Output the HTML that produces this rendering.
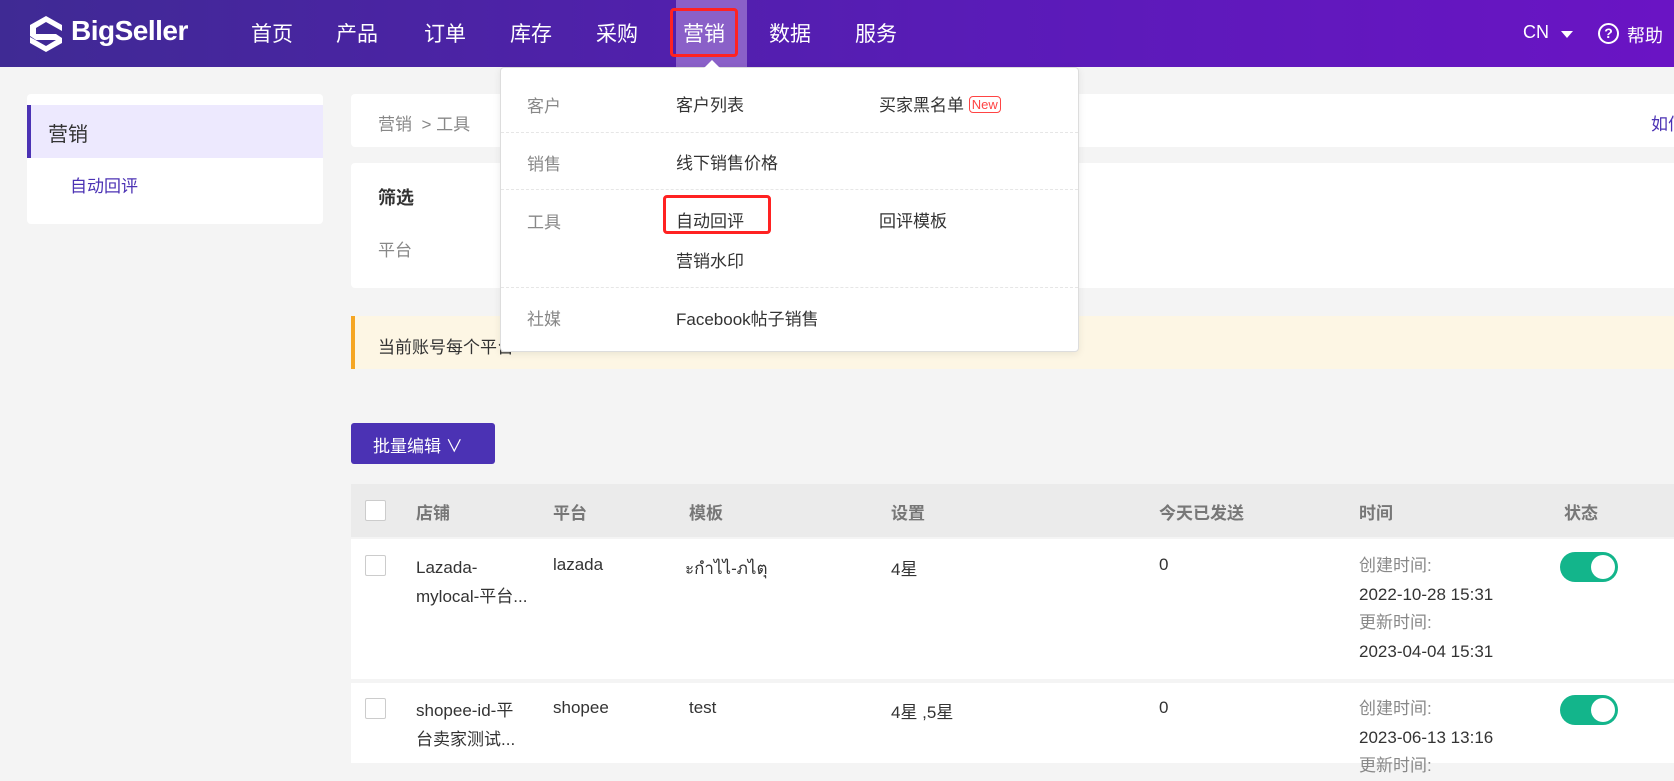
<!DOCTYPE html>
<html><head><meta charset="utf-8"><style>
*{margin:0;padding:0;box-sizing:border-box}
body{width:1674px;height:759px;overflow:hidden;background:#f4f4f4;font-family:"Liberation Sans","Noto Sans CJK SC",sans-serif;color:#333;position:relative;font-size:17px}
.abs{position:absolute}
.hdr{left:0;top:0;width:1674px;height:67px;background:linear-gradient(90deg,#3f2a94,#5a1bb8 60%,#6a14c4)}
.nav{top:18px;color:#fff;font-size:21px}
.card{background:#fff;border-radius:4px}
.t{white-space:nowrap}
.g{color:#888}
</style></head><body>
<div class="abs hdr"></div>
<svg class="abs" style="left:27px;top:14px" width="38" height="40" viewBox="0 0 38 40"><path d="M19 2 L35 11 L35 17 L19 8 L9 14 L9 20 L29 20 L35 24 L35 29 L19 38 L3 29 L3 23 L19 32 L29 26 L9 26 L3 22 L3 11 Z" fill="#fff"/></svg>
<div class="abs t" style="left:71px;top:15px;color:#fff;font-size:28px;font-weight:bold;letter-spacing:-0.5px">BigSeller</div>
<div class="abs" style="left:676px;top:0;width:71px;height:67px;background:#8a60c8"></div>
<div class="abs" style="left:670px;top:8px;width:68px;height:49px;border:3px solid #f22;border-radius:4px"></div>
<div class="abs nav t" style="left:251px">首页</div>
<div class="abs nav t" style="left:336px">产品</div>
<div class="abs nav t" style="left:424px">订单</div>
<div class="abs nav t" style="left:510px">库存</div>
<div class="abs nav t" style="left:596px">采购</div>
<div class="abs nav t" style="left:683px">营销</div>
<div class="abs nav t" style="left:769px">数据</div>
<div class="abs nav t" style="left:855px">服务</div>
<div class="abs t" style="left:1523px;top:22px;color:#fff;font-size:18px">CN</div>
<div class="abs" style="left:1561px;top:31px;border-left:6px solid transparent;border-right:6px solid transparent;border-top:7px solid #fff"></div>
<div class="abs" style="left:1598px;top:23px;width:21px;height:21px;border:2px solid #fff;border-radius:50%;color:#fff;font-size:14px;text-align:center;line-height:17px;font-weight:bold">?</div>
<div class="abs t" style="left:1627px;top:22px;color:#fff;font-size:18px">帮助</div>

<div class="abs card" style="left:27px;top:94px;width:296px;height:130px"></div>
<div class="abs" style="left:27px;top:105px;width:296px;height:53px;background:#ede9fe;border-left:4px solid #4b32b4"></div>
<div class="abs t" style="left:48px;top:118px;font-size:20px">营销</div>
<div class="abs t" style="left:70px;top:172px;color:#4b32b4">自动回评</div>

<div class="abs card" style="left:351px;top:94px;width:1330px;height:53px"></div>
<div class="abs t g" style="left:378px;top:110px">营销 &nbsp;&gt; 工具</div>
<div class="abs t" style="left:1651px;top:110px;color:#4b32b4">如何</div>
<div class="abs card" style="left:351px;top:163px;width:1330px;height:125px"></div>
<div class="abs t" style="left:378px;top:184px;font-weight:bold;font-size:18px">筛选</div>
<div class="abs t g" style="left:378px;top:236px">平台</div>
<div class="abs" style="left:351px;top:316px;width:1330px;height:53px;background:#fdf6e4;border-left:4px solid #f5a623"></div>
<div class="abs t" style="left:378px;top:333px">当前账号每个平台</div>

<div class="abs t" style="left:351px;top:423px;width:144px;height:41px;background:#4b32b4;color:#fff;border-radius:3px;padding:9px 0 0 22px">批量编辑 ∨</div>
<div class="abs" style="left:351px;top:484px;width:1330px;height:53px;background:#ebebeb"></div>
<div class="abs" style="left:351px;top:539px;width:1330px;height:140px;background:#fff"></div>
<div class="abs" style="left:351px;top:683px;width:1330px;height:80px;background:#fff"></div>
<div style="font-weight:bold;color:#777">
<div class="abs t" style="left:416px;top:499px">店铺</div>
<div class="abs t" style="left:553px;top:499px">平台</div>
<div class="abs t" style="left:689px;top:499px">模板</div>
<div class="abs t" style="left:891px;top:499px">设置</div>
<div class="abs t" style="left:1159px;top:499px">今天已发送</div>
<div class="abs t" style="left:1359px;top:499px">时间</div>
<div class="abs t" style="left:1564px;top:499px">状态</div>
</div>
<div class="abs" style="left:365px;top:500px;width:21px;height:21px;border:1px solid #ccc;background:#fff;border-radius:2px"></div>
<div class="abs" style="left:365px;top:555px;width:21px;height:21px;border:1px solid #ccc;background:#fff;border-radius:2px"></div>
<div class="abs" style="left:365px;top:698px;width:21px;height:21px;border:1px solid #ccc;background:#fff;border-radius:2px"></div>
<div class="abs" style="left:416px;top:553px;line-height:29px">Lazada-<br>mylocal-平台...</div>
<div class="abs t" style="left:553px;top:555px">lazada</div>
<div class="abs t" style="left:685px;top:555px">ะกำไไ-ภไตุ</div>
<div class="abs t" style="left:891px;top:555px">4星</div>
<div class="abs t" style="left:1159px;top:555px">0</div>
<div class="abs" style="left:1359px;top:552px;line-height:28.5px"><span class="g">创建时间:</span><br>2022-10-28 15:31<br><span class="g">更新时间:</span><br>2023-04-04 15:31</div>
<div class="abs" style="left:416px;top:696px;line-height:29px">shopee-id-平<br>台卖家测试...</div>
<div class="abs t" style="left:553px;top:698px">shopee</div>
<div class="abs t" style="left:689px;top:698px">test</div>
<div class="abs t" style="left:891px;top:698px">4星 ,5星</div>
<div class="abs t" style="left:1159px;top:698px">0</div>
<div class="abs" style="left:1359px;top:695px;line-height:28.5px"><span class="g">创建时间:</span><br>2023-06-13 13:16<br><span class="g">更新时间:</span></div>
<div class="abs" style="left:1560px;top:552px;width:58px;height:30px;background:#13b58b;border-radius:15px"><div class="abs" style="right:3px;top:3px;width:24px;height:24px;background:#fff;border-radius:50%"></div></div>
<div class="abs" style="left:1560px;top:695px;width:58px;height:30px;background:#13b58b;border-radius:15px"><div class="abs" style="right:3px;top:3px;width:24px;height:24px;background:#fff;border-radius:50%"></div></div>

<div class="abs card" style="left:500px;top:67px;width:579px;height:285px;border:1px solid #ddd;box-shadow:0 2px 8px rgba(0,0,0,.08)"></div>
<div class="abs" style="left:704px;top:60px;border-left:8px solid transparent;border-right:8px solid transparent;border-bottom:8px solid #fff"></div>
<div class="abs" style="left:501px;top:132px;width:577px;border-top:1px dashed #e6e6e6"></div>
<div class="abs" style="left:501px;top:189px;width:577px;border-top:1px dashed #e6e6e6"></div>
<div class="abs" style="left:501px;top:287px;width:577px;border-top:1px dashed #e6e6e6"></div>
<div class="abs t g" style="left:527px;top:92px">客户</div>
<div class="abs t" style="left:676px;top:91px">客户列表</div>
<div class="abs t" style="left:879px;top:91px">买家黑名单 <span style="color:#f44;font-size:13px;border:1px solid #f44;border-radius:4px;padding:0 2px;position:relative;top:-2px">New</span></div>
<div class="abs t g" style="left:527px;top:150px">销售</div>
<div class="abs t" style="left:676px;top:149px">线下销售价格</div>
<div class="abs t g" style="left:527px;top:208px">工具</div>
<div class="abs t" style="left:676px;top:207px">自动回评</div>
<div class="abs" style="left:663px;top:195px;width:108px;height:39px;border:3px solid #f22;border-radius:4px"></div>
<div class="abs t" style="left:879px;top:207px">回评模板</div>
<div class="abs t" style="left:676px;top:247px">营销水印</div>
<div class="abs t g" style="left:527px;top:305px">社媒</div>
<div class="abs t" style="left:676px;top:305px">Facebook帖子销售</div>
</body></html>
